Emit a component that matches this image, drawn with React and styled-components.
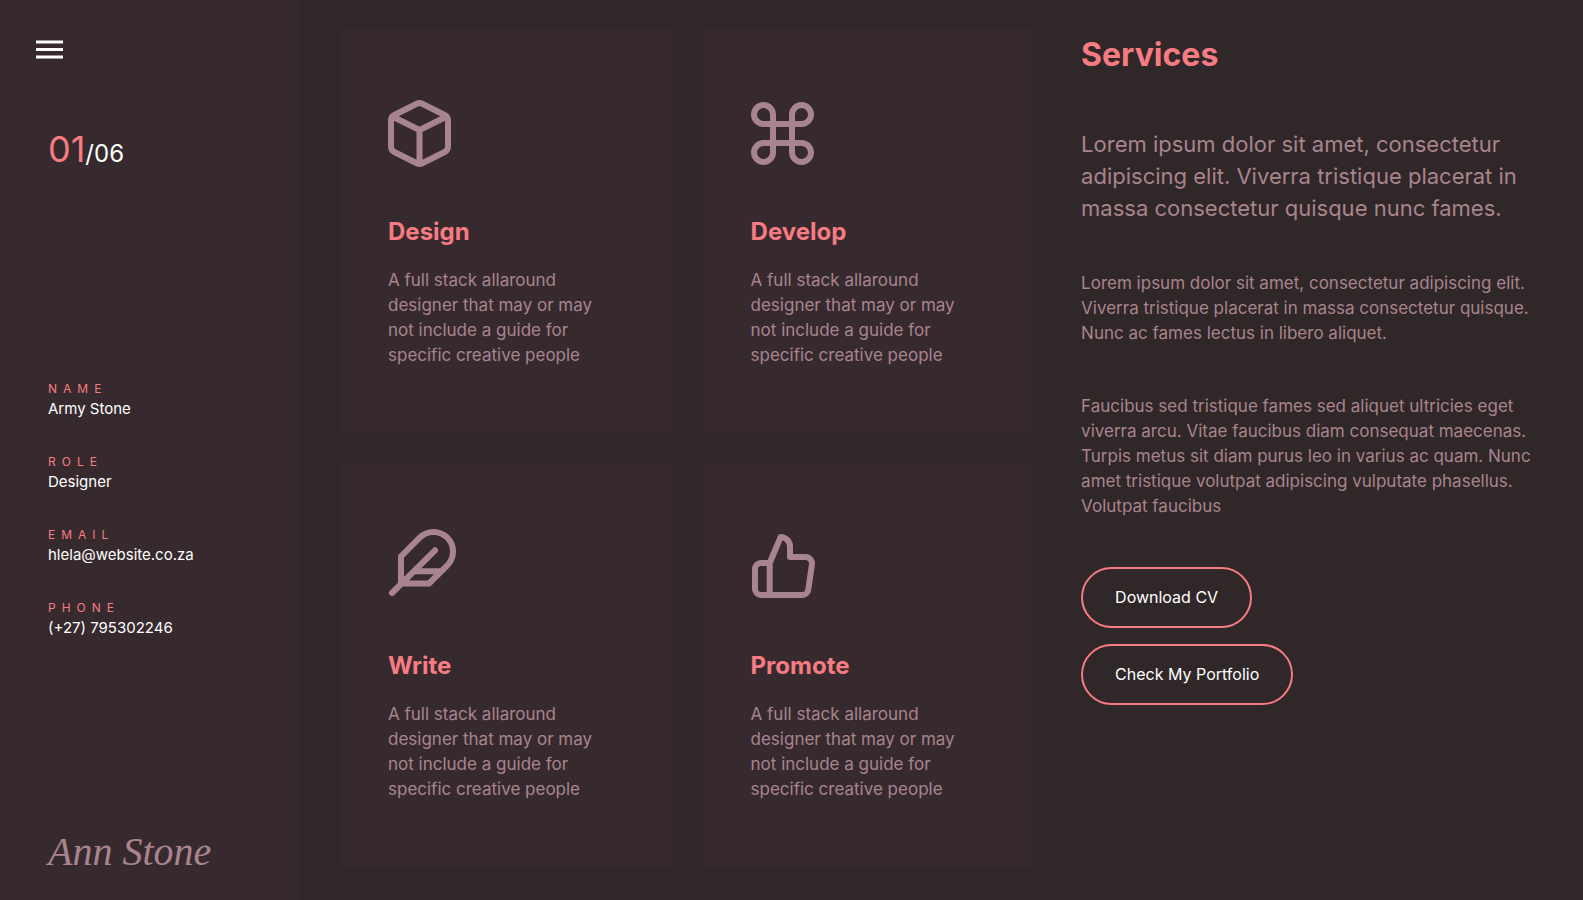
import React from 'react';
import styled, { createGlobalStyle } from 'styled-components';

const coral = '#f77b82';
const mauve = '#a8848e';
const panel = '#372a2e';
const ground = '#302728';

const GlobalStyle = createGlobalStyle`
  *, *::before, *::after { box-sizing: border-box; }
  body {
    margin: 0;
    background: ${ground};
    color: #fff;
    font-family: Inter, "Open Sans", sans-serif;
  }
  h1, h2, p, dl, dd { margin: 0; }
`;

const Page = styled.div`
  display: flex;
  min-height: 100vh;
`;

const Sidebar = styled.aside`
  flex: 0 0 300px;
  display: flex;
  flex-direction: column;
  align-items: flex-start;
  padding: 32px 32px 24px;
  background: ${panel};
`;

const MenuButton = styled.button`
  display: block;
  padding: 0;
  border: 0;
  background: none;
  color: #fff;
  cursor: pointer;

  svg { display: block; width: 36px; height: 36px; fill: currentColor; }
`;

const Counter = styled.p`
  margin: 57px 16px 0;
  font-size: 24px;
  line-height: 48px;
`;

const Current = styled.span`
  color: ${coral};
  font-size: 36px;
`;

const Details = styled.dl`
  display: grid;
  gap: 34px;
  margin: 202px 16px 48px;
`;

const Label = styled.dt`
  color: ${coral};
  font-size: 12px;
  line-height: 18px;
  letter-spacing: 6px;
  text-transform: uppercase;
`;

const Value = styled.dd`
  font-size: 15px;
  line-height: 21px;
`;

const Signature = styled.p`
  margin: auto 16px 0;
  color: ${mauve};
  font: italic 40px/48px "Liberation Serif", cursive;
  white-space: nowrap;
`;

const Main = styled.main`
  flex: 1;
  min-width: 0;
  display: grid;
  grid-template-columns: 29fr 21fr;
  gap: 48px;
  align-items: start;
  padding: 30px 0 30px 40px;
`;

const Cards = styled.section`
  display: grid;
  grid-template-columns: 1fr 1fr;
  gap: 32px;
`;

const Card = styled.article`
  padding: 67px 48px 64px;
  background: ${panel};
`;

const Icon = styled.svg`
  display: block;
  width: 72px;
  height: 72px;
  overflow: visible;
  fill: none;
  stroke: ${mauve};
  stroke-width: 6;
  stroke-linecap: round;
  stroke-linejoin: round;
`;

const CardTitle = styled.h2`
  margin: 45px 0 18px;
  color: ${coral};
  font-size: 24px;
  font-weight: 700;
  line-height: 36px;
`;

const Text = styled.p`
  color: ${mauve};
  font-size: 17px;
  line-height: 25px;
`;

const CardText = styled(Text)`
  max-width: 216px;
`;

const About = styled.section`
  padding-right: 48px;
`;

const Title = styled.h1`
  margin-bottom: 48px;
  color: ${coral};
  font-size: 32px;
  font-weight: 700;
  line-height: 50px;
`;

const Lead = styled(Text)`
  margin-bottom: 47px;
  font-size: 22px;
  line-height: 32px;
`;

const Paragraph = styled(Text)`
  margin-bottom: 48px;
`;

const Actions = styled.div`
  display: flex;
  flex-direction: column;
  align-items: flex-start;
  gap: 16px;
`;

const Button = styled.button`
  padding: 16px 32px;
  border: 2px solid ${coral};
  border-radius: 32px;
  background: none;
  color: #fff;
  font: 16px/25px Inter, "Open Sans", sans-serif;
  cursor: pointer;
`;

const details = [
  ['Name', 'Army Stone'],
  ['Role', 'Designer'],
  ['Email', 'hlela@website.co.za'],
  ['Phone', '(+27) 795302246'],
];

const services = [
  {
    title: 'Design',
    path: 'M28.8 6.7a6 6 0 0 1 5.4 0L56.7 18A6 6 0 0 1 60 23.4V49.6a6 6 0 0 1-3.3 5.4L34.2 66.3a6 6 0 0 1-5.4 0L6.3 55A6 6 0 0 1 3 49.6V23.4A6 6 0 0 1 6.3 18ZM4.8 19.8 31.5 33 58.2 19.8M31.5 33V67',
  },
  {
    title: 'Develop',
    path: 'M22 17.5V55.5a9.5 9.5 0 1 1-9.5-9.5H50.5a9.5 9.5 0 1 1-9.5 9.5V17.5a9.5 9.5 0 1 1 9.5 9.5H12.5a9.5 9.5 0 1 1 9.5-9.5Z',
  },
  {
    title: 'Write',
    path: 'M13 52.5V25.4L31.7 6.7A19.5 19.5 0 1 1 59.3 34.3L41 52.5ZM47 19.3 4 62M27 40.3H52.5',
  },
  {
    title: 'Promote',
    path: 'M18.7 32 29.7 6a9.5 9.5 0 0 1 9.3 9.5V26H54.5a6.5 6.5 0 0 1 6.4 7.5L57.3 58.6A6.3 6.3 0 0 1 51 64H10a6 6 0 0 1-6-6V38a6 6 0 0 1 6-6H18.7V64',
  },
];

export default function App() {
  return (
    <>
      <GlobalStyle />
      <Page>
        <Sidebar>
          <MenuButton type="button" aria-label="Menu">
            <svg viewBox="0.33 0.33 24 24" aria-hidden="true">
              <path d="M3 18h18v-2H3v2zm0-5h18v-2H3v2zm0-7v2h18V6H3z" />
            </svg>
          </MenuButton>
          <Counter><Current>01</Current>/06</Counter>
          <Details>
            {details.map(([label, value]) => (
              <div key={label}>
                <Label>{label}</Label>
                <Value>{value}</Value>
              </div>
            ))}
          </Details>
          <Signature>Ann Stone</Signature>
        </Sidebar>
        <Main>
          <Cards>
            {services.map(({ title, path }) => (
              <Card key={title}>
                <Icon viewBox="0 0 72 72" aria-hidden="true"><path d={path} /></Icon>
                <CardTitle>{title}</CardTitle>
                <CardText>
                  A full stack allaround designer that may or may not include a guide for specific creative people
                </CardText>
              </Card>
            ))}
          </Cards>
          <About>
            <Title>Services</Title>
            <Lead>
              Lorem ipsum dolor sit amet, consectetur adipiscing elit. Viverra tristique placerat in massa consectetur quisque nunc fames.
            </Lead>
            <Paragraph>
              Lorem ipsum dolor sit amet, consectetur adipiscing elit. Viverra tristique placerat in massa consectetur quisque. Nunc ac fames lectus in libero aliquet.
            </Paragraph>
            <Paragraph>
              Faucibus sed tristique fames sed aliquet ultricies eget viverra arcu. Vitae faucibus diam consequat maecenas. Turpis metus sit diam purus leo in varius ac quam. Nunc amet tristique volutpat adipiscing vulputate phasellus. Volutpat faucibus
            </Paragraph>
            <Actions>
              <Button type="button">Download CV</Button>
              <Button type="button">Check My Portfolio</Button>
            </Actions>
          </About>
        </Main>
      </Page>
    </>
  );
}
